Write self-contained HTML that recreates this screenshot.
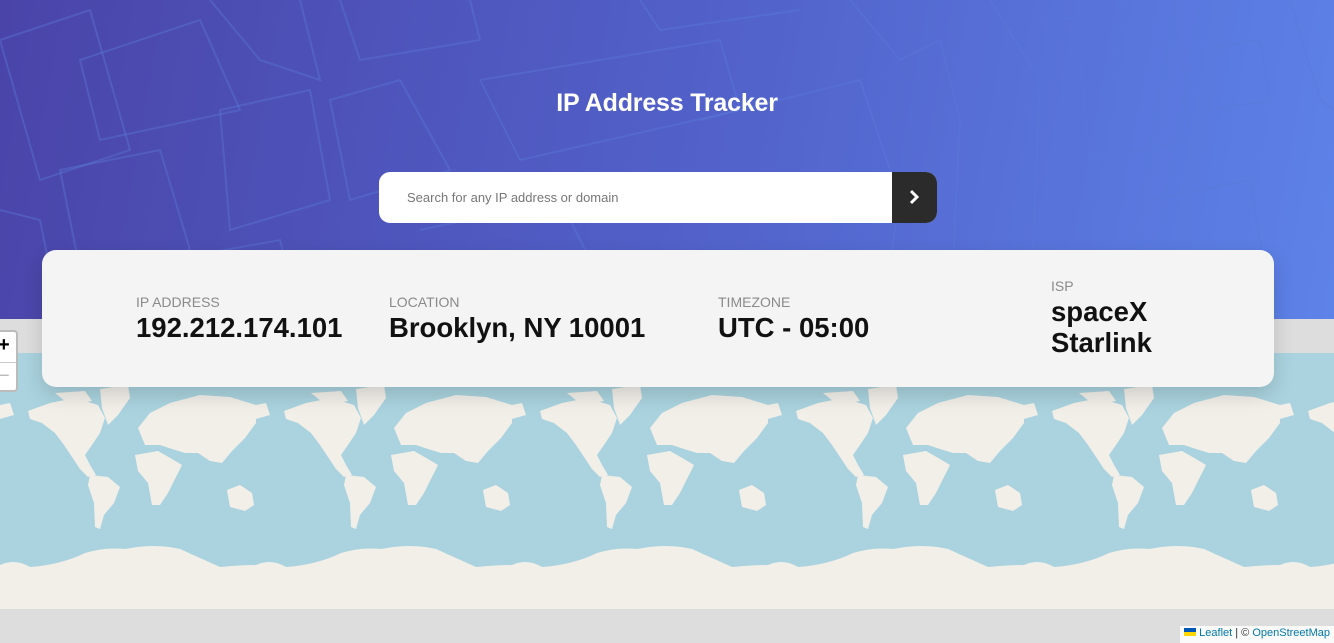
<!DOCTYPE html>
<html><head><meta charset="utf-8"><style>
*{margin:0;padding:0;box-sizing:border-box}
body{width:1334px;height:643px;overflow:hidden;background:#ddd;font-family:"Liberation Sans",sans-serif;position:relative}
.hdr{position:absolute;left:0;top:0;width:1334px;height:319px;background:linear-gradient(100deg,#4a44a8 0%,#5160c8 50%,#5d82e8 100%);overflow:hidden}
h1{position:absolute;top:89px;width:100%;text-align:center;color:#fff;font-size:25px;font-weight:bold;letter-spacing:-0.2px}
.search{position:absolute;left:379px;top:172px;width:558px;height:51px;background:#fff;border-radius:11px;overflow:hidden}
.search span{position:absolute;left:28px;top:18px;font-size:13px;color:#777}
.btn{position:absolute;right:0;top:0;width:45px;height:51px;background:#2b2b2b}
.card{position:absolute;left:42px;top:250px;width:1232px;height:137px;background:#f4f4f4;border-radius:14px;box-shadow:0 8px 20px rgba(0,0,0,.15);z-index:3}
.lab{position:absolute;font-size:14px;color:#8a8a8a;}
.val{position:absolute;font-size:27.5px;font-weight:bold;color:#111;line-height:31px}
.map{position:absolute;left:0;top:353px;width:1334px;height:256px}
.zoom{position:absolute;left:-4px;top:330px;width:22px;height:62px;background:#fff;border:2px solid #bbb;border-radius:4px;z-index:2}
.attr{position:absolute;right:0;top:626px;height:17px;background:rgba(255,255,255,.85);font-size:11px;color:#333;padding:1px 4px}
.attr a{color:#0078a8;text-decoration:none}
</style></head><body>
<div class="hdr">
<svg width="1334" height="319" style="position:absolute;left:0;top:0" fill="none" stroke="#5a7ad8" stroke-opacity=".4" stroke-width="2">
<path d="M0 40 L90 10 L130 150 L40 180 Z"/><path d="M80 60 L200 20 L240 110 L100 140 Z"/><path d="M210 0 L260 60 L320 80 L300 0"/>
<path d="M220 110 L310 90 L330 200 L230 230 Z"/><path d="M60 170 L160 150 L190 250 L80 270 Z"/><path d="M0 210 L40 220 L60 319"/>
<path d="M340 0 L360 60 L480 40 L470 0"/><path d="M330 100 L400 80 L450 170 L350 200 Z"/><path d="M480 80 L720 40 L740 110 L520 160 Z"/>
<path d="M640 0 L660 30 L800 10"/><path d="M700 120 L860 80 L900 200 L880 319"/><path d="M850 0 L900 60 L940 40 L960 120 L950 319"/>
<path d="M990 0 L1040 80 L1030 319"/><path d="M1060 20 L1160 0"/><path d="M1080 60 L1180 40 L1190 140 L1090 160 Z"/>
<path d="M1200 50 L1260 40 L1270 100 L1210 110 Z"/><path d="M1150 200 L1250 180 L1270 300"/><path d="M1290 0 L1320 100 L1334 110"/>
<path d="M420 230 L560 200 L620 319"/><path d="M150 319 L170 260 L280 240 L300 319"/>
</svg>
<h1>IP Address Tracker</h1>
<div class="search"><span>Search for any IP address or domain</span><div class="btn"><svg width="45" height="51"><path d="M19 19 L25 25 L19 31" stroke="#fff" stroke-width="3" fill="none"/></svg></div></div>
</div>
<svg class="map" width="1334" height="256">
<defs><pattern id="w" x="0" y="0" width="256" height="256" patternUnits="userSpaceOnUse">
<rect width="256" height="256" fill="#aad3df"/>
<g fill="#f2efe9">
<path d="M28 58 L50 50 L75 45 L98 52 L105 65 L100 80 L92 92 L85 102 L90 112 L96 122 L88 124 L80 116 L72 104 L64 92 L55 80 L42 70 L30 66 Z"/>
<path d="M100 36 L128 32 L130 45 L118 62 L108 72 L102 55 Z"/>
<path d="M55 40 L85 38 L92 48 L70 52 Z"/>
<path d="M90 122 L108 124 L120 134 L114 150 L104 162 L100 176 L95 174 L94 150 L88 132 Z"/>
<path d="M138 75 L150 60 L170 50 L200 42 L230 44 L256 52 L256 70 L245 85 L232 98 L222 110 L210 108 L198 100 L185 100 L172 96 L160 92 L145 92 Z"/>
<path d="M0 52 L10 50 L14 62 L0 66 Z"/>
<path d="M135 102 L158 98 L172 106 L182 112 L176 124 L168 140 L160 152 L152 152 L148 130 L138 118 Z"/>
<path d="M227 137 L240 132 L252 140 L254 152 L245 158 L230 154 Z"/>
<path d="M0 212 Q15 205 30 214 Q60 212 85 200 Q105 194 125 196 Q155 190 180 196 Q200 205 220 214 Q240 212 256 212 L256 256 L0 256 Z"/>
</g></pattern></defs>
<rect width="1334" height="256" fill="url(#w)"/>
</svg>
<div class="zoom"><div style="position:absolute;left:0;top:2px;font-size:20px;font-weight:bold;color:#000">+</div><div style="position:absolute;left:0;top:30px;width:18px;border-top:1px solid #ccc"></div><div style="position:absolute;left:0;top:33px;font-size:20px;color:#bbb">−</div></div>
<div class="card">
<div class="lab" style="left:94px;top:44px">IP ADDRESS</div><div class="val" style="left:94px;top:62px">192.212.174.101</div>
<div class="lab" style="left:347px;top:44px">LOCATION</div><div class="val" style="left:347px;top:62px">Brooklyn, NY 10001</div>
<div class="lab" style="left:676px;top:44px">TIMEZONE</div><div class="val" style="left:676px;top:62px">UTC - 05:00</div>
<div class="lab" style="left:1009px;top:28px">ISP</div><div class="val" style="left:1009px;top:46px">spaceX<br>Starlink</div>
</div>
<div class="attr"><span style="display:inline-block;width:12px;height:8px;background:linear-gradient(#0057b7 50%,#ffd700 50%)"></span> <a>Leaflet</a> | © <a>OpenStreetMap</a></div>
</body></html>
